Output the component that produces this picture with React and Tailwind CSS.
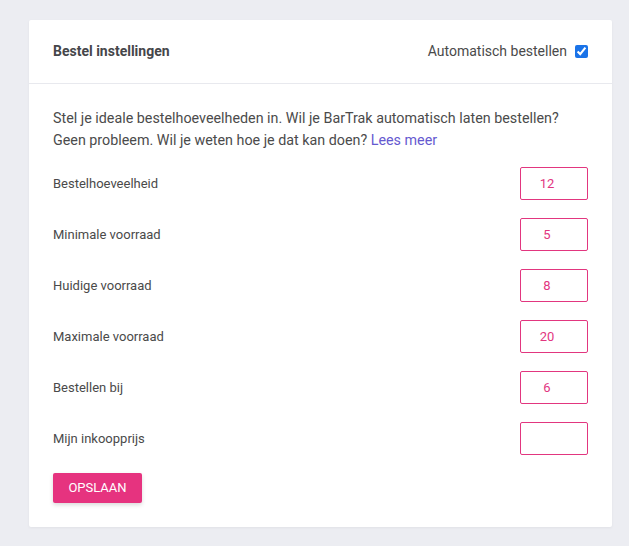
export default function App() {
  const rows = [
    ['Bestelhoeveelheid', '12'],
    ['Minimale voorraad', '5'],
    ['Huidige voorraad', '8'],
    ['Maximale voorraad', '20'],
    ['Bestellen bij', '6'],
    ['Mijn inkoopprijs', ''],
  ];

  return (
    <div className="min-h-[546px] w-full bg-[#ecedf2] pt-5 pl-[29px] pr-[17px] font-['Roboto',sans-serif] text-[#4a4a4a]">
      {/* Card */}
      <div className="bg-white rounded-[2px] shadow-[0_1px_3px_rgba(0,0,0,0.05)]">
        <div className="h-16 flex items-center justify-between px-6 border-b border-[#e8e9ee]">
          <h2 className="text-[14px] font-bold text-[#45464a]">Bestel instellingen</h2>
          <label className="flex items-center gap-2 text-[14px] text-[#4a4a4a]">
            Automatisch bestellen
            <input type="checkbox" defaultChecked className="w-[13px] h-[13px] accent-[#1a73e8]" />
          </label>
        </div>
        <div className="px-6 pt-[23px] pb-6">
          <p className="text-[14.3px] leading-[22px] text-[#4b4b4b]">
            Stel je ideale bestelhoeveelheden in. Wil je BarTrak automatisch laten bestellen?
            <br />
            Geen probleem. Wil je weten hoe je dat kan doen?{' '}
            <a href="#" className="text-[#6559d0]">Lees meer</a>
          </p>
          <div className="mt-[16px] flex flex-col gap-[18px]">
            {rows.map(([label, value]) => (
              <div key={label} className="flex items-center justify-between">
                <span className="text-[13px] text-[#4a4a4a]">{label}</span>
                <input
                  defaultValue={value}
                  className="w-[68px] h-[33px] border border-[#e2367f] rounded-[2px] text-center pr-[14px] text-[13px] text-[#e2367f] outline-none"
                />
              </div>
            ))}
          </div>
          <button className="mt-[18px] w-[89px] h-[30px] bg-[#e6337f] text-white text-[13px] rounded-[2px] shadow-[0_2px_4px_rgba(0,0,0,0.15)]">
            OPSLAAN
          </button>
        </div>
      </div>
    </div>
  );
}
